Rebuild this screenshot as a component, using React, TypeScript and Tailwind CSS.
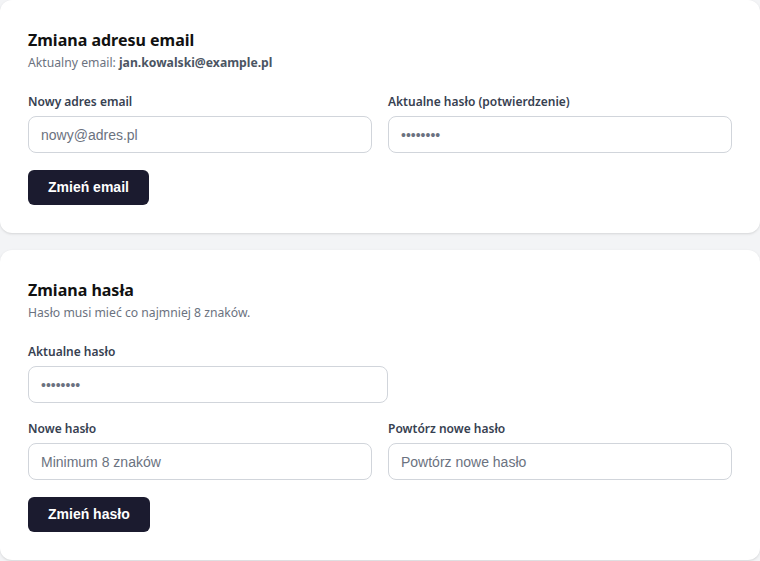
import React from 'react';

const uiFont = { fontFamily: '"Noto Sans", "Open Sans", sans-serif' };

type FieldProps = {
  label: string;
  placeholder?: string;
  password?: boolean;
};

const Field: React.FC<FieldProps> = ({ label, placeholder, password }) => (
  <div className="flex flex-col">
    <label className="mb-[5px] text-[12px] font-semibold leading-[18px] text-[#374151]" style={uiFont}>
      {label}
    </label>
    <input
      type={password ? 'password' : 'text'}
      defaultValue={password ? '12345678' : undefined}
      placeholder={placeholder}
      readOnly
      className="h-[37px] w-full rounded-lg border border-[#d1d5db] bg-white px-3 font-['Liberation_Sans',Arial,sans-serif] text-[14px] text-[#6b7280] placeholder:text-[#6b7280] focus:outline-none"
    />
  </div>
);

const SubmitButton: React.FC<{ children: React.ReactNode }> = ({ children }) => (
  <button className="h-[35px] self-start rounded-md bg-[#1b1b2f] px-5 font-['Liberation_Sans',Arial,sans-serif] text-[14px] font-bold text-white">
    {children}
  </button>
);

export default function App() {
  return (
    <div className="flex min-h-[561px] flex-col gap-[17px] bg-[#f3f4f6]">
      {/* Email change */}
      <section className="rounded-xl bg-white p-7 shadow-sm">
        <h2 className="text-[16px] font-bold leading-6 text-[#111111]" style={uiFont}>
          Zmiana adresu email
        </h2>
        <p className="mt-[2px] text-[12.2px] leading-[18px] text-[#6b7280]" style={uiFont}>
          Aktualny email: <span className="font-bold text-[#4b5563]">jan.kowalski@example.pl</span>
        </p>

        <div className="mt-[21px] grid grid-cols-2 gap-4">
          <Field label="Nowy adres email" placeholder="nowy@adres.pl" />
          <Field label="Aktualne hasło (potwierdzenie)" password />
        </div>

        <div className="mt-[17px] flex">
          <SubmitButton>Zmień email</SubmitButton>
        </div>
      </section>

      {/* Password change */}
      <section className="rounded-xl bg-white p-7 shadow-sm">
        <h2 className="text-[16px] font-bold leading-6 text-[#111111]" style={uiFont}>
          Zmiana hasła
        </h2>
        <p className="mt-[2px] text-[12.2px] leading-[18px] text-[#6b7280]" style={uiFont}>
          Hasło musi mieć co najmniej 8 znaków.
        </p>

        <div className="mt-[21px] w-[360px]">
          <Field label="Aktualne hasło" password />
        </div>

        <div className="mt-[17px] grid grid-cols-2 gap-4">
          <Field label="Nowe hasło" placeholder="Minimum 8 znaków" />
          <Field label="Powtórz nowe hasło" placeholder="Powtórz nowe hasło" />
        </div>

        <div className="mt-[17px] flex">
          <SubmitButton>Zmień hasło</SubmitButton>
        </div>
      </section>
    </div>
  );
}
